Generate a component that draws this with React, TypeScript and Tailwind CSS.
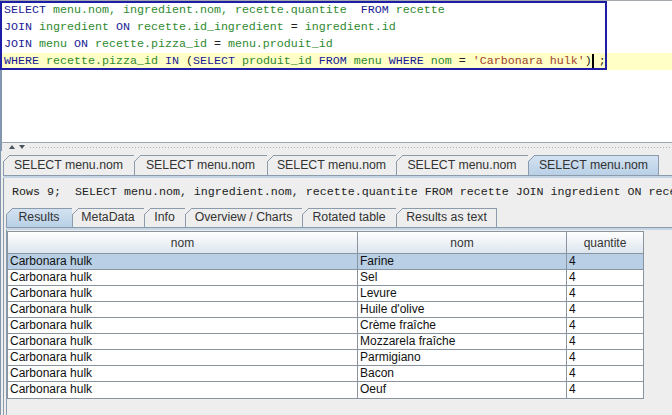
import React from 'react';

const KEYWORDS = ['SELECT', 'FROM', 'JOIN', 'ON', 'WHERE', 'IN'];

const sqlLines = [
  'SELECT menu.nom, ingredient.nom, recette.quantite  FROM recette',
  'JOIN ingredient ON recette.id_ingredient = ingredient.id',
  'JOIN menu ON recette.pizza_id = menu.produit_id',
  "WHERE recette.pizza_id IN (SELECT produit_id FROM menu WHERE nom = 'Carbonara hulk')",
];

const highlight = (line: string, key: string) =>
  line
    .split(/('[^']*'|\s+|[=();])/)
    .filter((t) => t !== '')
    .map((t, i) => {
      let cls = 'text-[#2f8a2f]';
      if (KEYWORDS.includes(t)) cls = 'text-[#1a1a96]';
      else if (t.startsWith("'")) cls = 'text-[#a0432a]';
      else if (/^[=();]$/.test(t) || /^\s+$/.test(t)) cls = 'text-[#222]';
      return (
        <span key={`${key}-${i}`} className={cls}>
          {t}
        </span>
      );
    });

const rows = [
  ['Carbonara hulk', 'Farine', '4'],
  ['Carbonara hulk', 'Sel', '4'],
  ['Carbonara hulk', 'Levure', '4'],
  ['Carbonara hulk', "Huile d'olive", '4'],
  ['Carbonara hulk', 'Crème fraîche', '4'],
  ['Carbonara hulk', 'Mozzarela fraîche', '4'],
  ['Carbonara hulk', 'Parmigiano', '4'],
  ['Carbonara hulk', 'Bacon', '4'],
  ['Carbonara hulk', 'Oeuf', '4'],
];

interface TabProps {
  label: string;
  className: string;
  active?: boolean;
  last?: boolean;
}

const Tab = ({ label, className, active, last }: TabProps) => (
  <div className={`relative shrink-0 ${className}`}>
    <div
      className={`absolute inset-0 [clip-path:polygon(0_6px,6px_0,100%_0,100%_100%,0_100%)] ${
        active ? 'bg-linear-to-b from-[#d4e3f2] to-[#b9d0e6]' : 'bg-[#eeeeee]'
      }`}
    />
    <div className="absolute left-0 top-[6px] bottom-0 w-px bg-[#8b9bab]" />
    <div className="absolute left-[6px] top-0 right-0 h-px bg-[#8b9bab]" />
    {last && <div className="absolute right-0 top-0 bottom-0 w-px bg-[#8b9bab]" />}
    <svg className="absolute left-0 top-0" width="7" height="7">
      <line x1="0.5" y1="6.5" x2="6.5" y2="0.5" stroke="#8b9bab" strokeWidth="1" />
    </svg>
    <div className="relative h-full flex items-center justify-center text-[12.3px] text-[#333] whitespace-nowrap">
      {label}
    </div>
  </div>
);

export default function App() {
  return (
    <div className="w-[672px] h-[415px] overflow-hidden bg-[#eeeeee] flex flex-col font-['Liberation_Sans',Arial,sans-serif]">
      {/* SQL editor */}
      <div className="relative h-[142px] shrink-0 bg-white border-t border-[#a4a9ae] border-l-2 border-l-[#8297ad] pt-[1px] font-['Liberation_Mono','Courier_New',monospace] text-[11.67px]">
        {sqlLines.map((line, idx) => (
          <div
            key={idx}
            className={`h-[17px] flex items-center pl-[2px] whitespace-pre ${idx === 3 ? 'bg-[#ffffc6]' : ''}`}
          >
            {highlight(line, `l${idx}`)}
            {idx === 3 && (
              <>
                <span className="inline-block w-[2px] h-[15px] bg-black -mr-[2px]" />
                <span className="text-[#222]"> ;</span>
              </>
            )}
          </div>
        ))}
        <div className="absolute -left-[2px] top-0 w-[607px] h-[69px] border-2 border-[#1d1da6] pointer-events-none" />
      </div>

      {/* split divider */}
      <div className="h-[9px] shrink-0 border-t border-[#9aa5b0] flex items-center gap-[1px] pl-[7px] border-l-2 border-l-[#8297ad]">
        <svg width="6" height="4" viewBox="0 0 6 4">
          <path d="M0 4 L3 0 L6 4 Z" fill="#4a5560" />
        </svg>
        <svg width="6" height="4" viewBox="0 0 6 4" className="ml-[3px]">
          <path d="M0 0 L6 0 L3 4 Z" fill="#4a5560" />
        </svg>
        <div className="flex-1 ml-[3px] h-[3px] bg-[radial-gradient(#a9b1b9_0.7px,transparent_0.8px)] bg-[length:3px_3px]" />
      </div>

      {/* result tabs */}
      <div className="flex-1 flex flex-col border-l border-[#8297ad] pt-[4px]">
        <div className="flex pl-[2px] h-[20px] shrink-0">
          <Tab label="SELECT menu.nom" className="w-[131px]" />
          <Tab label="SELECT menu.nom" className="w-[133px]" />
          <Tab label="SELECT menu.nom" className="w-[129px]" />
          <Tab label="SELECT menu.nom" className="w-[132px]" />
          <Tab label="SELECT menu.nom" className="w-[131px]" active last />
        </div>
        <div className="h-[3px] shrink-0 border-t border-[#8b9bab] bg-[#c6d5e4] ml-[2px]" />

        <div className="flex-1 flex flex-col ml-[2px] border-l border-[#8b9bab]">
          <div className="h-[30px] shrink-0 flex items-center pl-[8px] whitespace-pre font-['Liberation_Mono','Courier_New',monospace] text-[11.67px] text-[#222] overflow-hidden">
            Rows 9;  SELECT menu.nom, ingredient.nom, recette.quantite FROM recette JOIN ingredient ON rece
          </div>

          <div className="flex pl-[2px] h-[19px] shrink-0">
            <Tab label="Results" className="w-[66px]" active />
            <Tab label="MetaData" className="w-[72px]" />
            <Tab label="Info" className="w-[41px]" />
            <Tab label="Overview / Charts" className="w-[117px]" />
            <Tab label="Rotated table" className="w-[94px]" />
            <Tab label="Results as text" className="w-[101px]" last />
          </div>
          <div className="h-[3px] shrink-0 border-t border-[#8b9bab] bg-[#c6d5e4] ml-[2px]" />

          <div className="flex-1 ml-[2px] border-l border-[#8b9bab] pt-[1px]">
            <div className="w-[637px] border-l border-b border-[#8a949e] text-[12px]">
              <div className="flex h-[23px] bg-linear-to-b from-white to-[#dde5ee] border-t border-b border-[#8a949e] text-[#333]">
                <div className="w-[350px] border-r border-[#8a949e] flex items-center justify-center">nom</div>
                <div className="w-[209px] border-r border-[#8a949e] flex items-center justify-center">nom</div>
                <div className="w-[77px] border-r border-[#8a949e] flex items-center justify-center">quantite</div>
              </div>
              {rows.map((r, i) => (
                <div
                  key={i}
                  className={`flex h-[16px] border-b border-[#8a949e] last:border-b-0 text-[#111] ${
                    i === 0 ? 'bg-[#b8cfe5]' : 'bg-white'
                  }`}
                >
                  <div className="w-[350px] border-r border-[#8a949e] pl-[2px] leading-[15px]">{r[0]}</div>
                  <div className="w-[209px] border-r border-[#8a949e] pl-[2px] leading-[15px]">{r[1]}</div>
                  <div className="w-[77px] border-r border-[#8a949e] pl-[2px] leading-[15px]">{r[2]}</div>
                </div>
              ))}
            </div>
          </div>
        </div>
      </div>
    </div>
  );
}
